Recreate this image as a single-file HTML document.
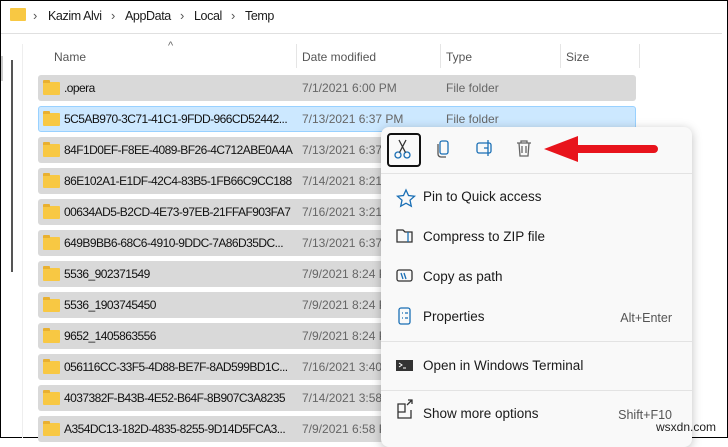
<!DOCTYPE html>
<html><head><style>
body{margin:0;width:728px;height:438px;overflow:hidden;background:#fff;font-family:"Liberation Sans",sans-serif;position:relative}
.frame{position:absolute;left:0;top:0;width:726px;height:436px;border:1px solid #000;box-sizing:content-box}
.t{position:absolute;white-space:nowrap;font-size:12px;color:#1a1a1a}
.row{position:absolute;left:38px;width:598px;height:26px;background:#d9d9d9;border-radius:3px}
.row.sel{background:#cce8ff;box-sizing:border-box;border:1px solid #99d1ff}
.fold{position:absolute;left:5px;top:7px;width:17px;height:13px;background:#f8c843;border-radius:1px}
.fold:before{content:"";position:absolute;left:0;top:-2px;width:7px;height:3px;background:#e9b030;border-radius:1px 1px 0 0}
.fn{position:absolute;left:26px;top:6px;font-size:12px;letter-spacing:-0.55px;color:#111;white-space:nowrap}
.dt{position:absolute;left:264px;top:6px;font-size:12px;color:#666;white-space:nowrap}
.ty{position:absolute;left:408px;top:6px;font-size:12px;color:#666}
.menu{position:absolute;left:381px;top:127px;width:311px;height:320px;background:#f9f9f9;border-radius:8px;box-shadow:0 2px 10px rgba(0,0,0,.25)}
.mi{position:absolute;left:42px;font-size:13.5px;color:#1a1a1a;white-space:nowrap}
.sc{position:absolute;right:20px;font-size:12.5px;color:#555}
.sep{position:absolute;left:0;width:311px;height:1px;background:#e3e3e3}
</style></head><body>
<div class="frame"></div>
<div style="position:absolute;left:1px;top:33px;width:721px;height:1px;background:#e0e0e0"></div>
<div style="position:absolute;left:10px;top:8px;width:16px;height:13px;background:#f8c843;border-radius:1px"></div>
<div class="t" style="left:33px;top:8px;font-size:13px;color:#555">›</div>
<div class="t" style="left:48px;top:9px;font-size:12.5px;letter-spacing:-0.4px">Kazim Alvi</div>
<div class="t" style="left:111px;top:8px;font-size:13px;color:#555">›</div>
<div class="t" style="left:125px;top:9px;font-size:12.5px;letter-spacing:-0.4px">AppData</div>
<div class="t" style="left:180px;top:8px;font-size:13px;color:#555">›</div>
<div class="t" style="left:194px;top:9px;font-size:12.5px;letter-spacing:-0.4px">Local</div>
<div class="t" style="left:231px;top:8px;font-size:13px;color:#555">›</div>
<div class="t" style="left:245px;top:9px;font-size:12.5px;letter-spacing:-0.4px">Temp</div>
<div style="position:absolute;left:1px;top:56px;width:2px;height:25px;background:#ccc"></div>
<div style="position:absolute;left:22px;top:44px;width:1px;height:394px;background:#eee"></div>
<div style="position:absolute;left:11px;top:60px;width:2px;height:212px;background:#555"></div>
<div class="t" style="left:168px;top:40px;color:#666;font-size:11px">^</div>
<div class="t" style="left:54px;top:50px;color:#555">Name</div>
<div class="t" style="left:302px;top:50px;color:#555">Date modified</div>
<div class="t" style="left:446px;top:50px;color:#555">Type</div>
<div class="t" style="left:566px;top:50px;color:#555">Size</div>
<div style="position:absolute;left:296px;top:44px;width:1px;height:24px;background:#e5e5e5"></div>
<div style="position:absolute;left:440px;top:44px;width:1px;height:24px;background:#e5e5e5"></div>
<div style="position:absolute;left:560px;top:44px;width:1px;height:24px;background:#e5e5e5"></div>
<div style="position:absolute;left:639px;top:44px;width:1px;height:24px;background:#e5e5e5"></div>

<div class="row" style="top:75px"><div class="fold"></div><div class="fn">.opera</div><div class="dt">7/1/2021 6:00 PM</div><div class="ty">File folder</div></div>
<div class="row sel" style="top:106px"><div class="fold" style="left:4px;top:6px"></div><div class="fn" style="left:25px;top:5px">5C5AB970-3C71-41C1-9FDD-966CD52442...</div><div class="dt" style="left:263px;top:5px">7/13/2021 6:37 PM</div><div class="ty" style="left:407px;top:5px">File folder</div></div>
<div class="row" style="top:137px"><div class="fold"></div><div class="fn">84F1D0EF-F8EE-4089-BF26-4C712ABE0A4A</div><div class="dt">7/13/2021 6:37 PM</div></div>
<div class="row" style="top:168px"><div class="fold"></div><div class="fn">86E102A1-E1DF-42C4-83B5-1FB66C9CC188</div><div class="dt">7/14/2021 8:21 PM</div></div>
<div class="row" style="top:199px"><div class="fold"></div><div class="fn">00634AD5-B2CD-4E73-97EB-21FFAF903FA7</div><div class="dt">7/16/2021 3:21 PM</div></div>
<div class="row" style="top:230px"><div class="fold"></div><div class="fn">649B9BB6-68C6-4910-9DDC-7A86D35DC...</div><div class="dt">7/13/2021 6:37 PM</div></div>
<div class="row" style="top:261px"><div class="fold"></div><div class="fn">5536_902371549</div><div class="dt">7/9/2021 8:24 PM</div></div>
<div class="row" style="top:292px"><div class="fold"></div><div class="fn">5536_1903745450</div><div class="dt">7/9/2021 8:24 PM</div></div>
<div class="row" style="top:323px"><div class="fold"></div><div class="fn">9652_1405863556</div><div class="dt">7/9/2021 8:24 PM</div></div>
<div class="row" style="top:354px"><div class="fold"></div><div class="fn">056116CC-33F5-4D88-BE7F-8AD599BD1C...</div><div class="dt">7/16/2021 3:40 PM</div></div>
<div class="row" style="top:385px"><div class="fold"></div><div class="fn">4037382F-B43B-4E52-B64F-8B907C3A8235</div><div class="dt">7/14/2021 3:58 PM</div></div>
<div class="row" style="top:416px"><div class="fold"></div><div class="fn">A354DC13-182D-4835-8255-9D14D5FCA3...</div><div class="dt">7/9/2021 6:58 PM</div></div>

<div class="menu">
<div style="position:absolute;left:6px;top:6px;width:30px;height:30px;border:2px solid #111;border-radius:4px"></div>
<svg style="position:absolute;left:0;top:0" width="311" height="320" fill="none" stroke-width="1.3">
<g stroke="#1a6fb5"><circle cx="17" cy="28" r="3"/><circle cx="26" cy="28" r="3"/><path d="M18.5 25.5L25 13M24.5 25.5L18 13" stroke="#333"/></g>
<g stroke="#1a6fb5"><rect x="59" y="14" width="8" height="13" rx="2"/><path d="M57 17v10a3 3 0 0 0 3 3h5" stroke="#555"/></g>
<g stroke="#1a6fb5"><rect x="96" y="16" width="14" height="10" rx="2"/><path d="M103 21h4M107 13v16" /></g>
<g stroke="#666"><path d="M136 16h14M140 16v-2h6v2M138 16l1 13h8l1-13M141 19v7M145 19v7"/></g>
<g stroke="#1a6fb5"><path d="M25 63l2.5 5.5 6 .7-4.5 4 1.3 6-5.3-3-5.3 3 1.3-6-4.5-4 6-.7z"/></g>
<g stroke="#333"><path d="M16 103h6l2 2h7v10H16z"/><path d="M27 105v10" stroke="#1a6fb5"/></g>
<g stroke="#333"><rect x="16" y="143" width="15" height="11" rx="2"/><path d="M20 146l2 6M23 146l2 6" stroke="#1a6fb5"/></g>
<g stroke="#1a6fb5"><rect x="18" y="181" width="11" height="16" rx="2"/><path d="M21 186h1M24 186h3M21 191h1M24 191h3"/></g>
<rect x="15" y="233" width="17" height="11" fill="#333"/><path d="M18 236l3 2-3 2M22 241h3" stroke="#fff" stroke-width="1"/>
<g stroke="#333"><path d="M17 285v-8h7v8h-7zm0 0v6h13v-8M26 278l5-5M27 273h4v4" /></g>
<path d="M163 22l34-13v9h76a4 4 0 0 1 0 8h-76v9z" fill="#e8141c" stroke="none"/>
</svg>
<div class="sep" style="top:46px"></div>
<div class="mi" style="top:62px">Pin to Quick access</div>
<div class="mi" style="top:102px">Compress to ZIP file</div>
<div class="mi" style="top:142px">Copy as path</div>
<div class="mi" style="top:182px">Properties</div><div class="sc" style="top:184px">Alt+Enter</div>
<div class="sep" style="top:214px"></div>
<div class="mi" style="top:231px">Open in Windows Terminal</div>
<div class="sep" style="top:263px"></div>
<div class="mi" style="top:279px">Show more options</div><div class="sc" style="top:281px">Shift+F10</div>
</div>
<div class="t" style="left:656px;top:420px;font-size:12px;color:#222">wsxdn.com</div>
</body></html>
